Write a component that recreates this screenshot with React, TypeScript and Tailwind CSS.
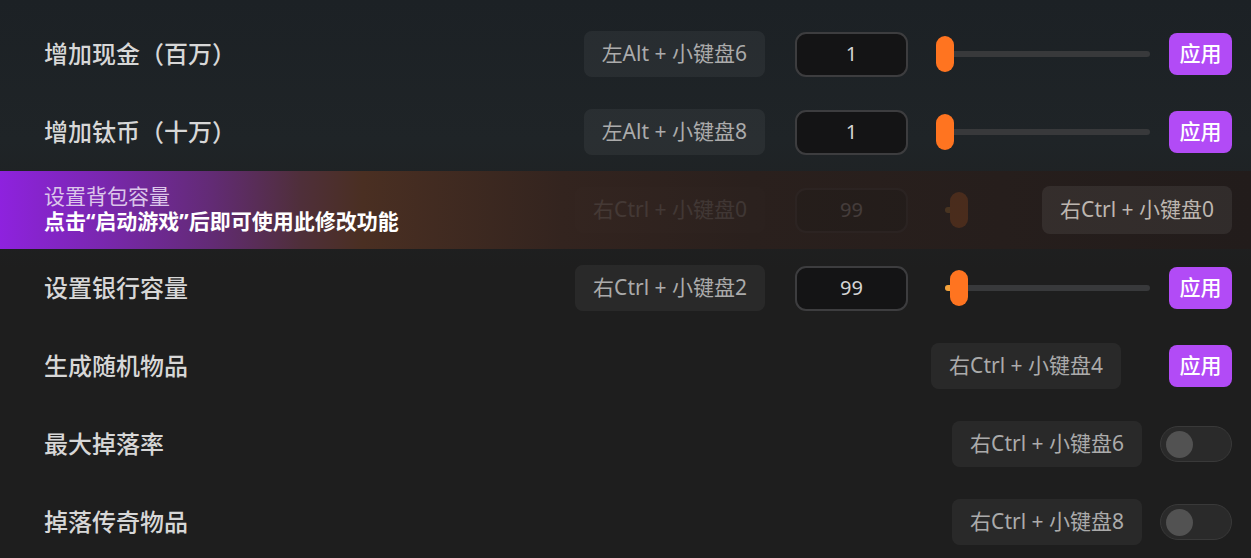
import React from "react";

const font = { fontFamily: '"Noto Sans", "Noto Sans CJK SC", sans-serif' };

function Chip({ text, className = "" }: { text: string; className?: string }) {
  return (
    <div
      className={`h-[46px] px-[18px] flex items-center rounded-[8px] bg-white/[0.05] text-[21px] text-[#ababab] whitespace-nowrap ${className}`}
    >
      {text}
    </div>
  );
}

function NumInput({ value }: { value: string }) {
  return (
    <div className="w-[113px] h-[45px] rounded-[11px] border-2 border-[#3d3d3f] bg-[#141415] flex items-center justify-center text-[20px] text-[#d4d4d4]">
      {value}
    </div>
  );
}

function Slider({ pos, fill, noTrack }: { pos: number; fill?: boolean; noTrack?: boolean }) {
  return (
    <div className="relative w-[214px] h-[36px]">
      {!noTrack && <div className="absolute left-[9px] right-0 top-[15px] h-[6px] rounded-full bg-[#38393b]" />}
      {fill && (
        <div
          className="absolute left-[9px] top-[15px] h-[6px] rounded-full bg-[#f5a23a]"
          style={{ width: pos }}
        />
      )}
      <div
        className="absolute top-0 w-[18px] h-[36px] rounded-full bg-[#ff7420]"
        style={{ left: pos }}
      />
    </div>
  );
}

function ApplyBtn({ hidden }: { hidden?: boolean }) {
  return (
    <div
      className={`w-[63px] h-[42px] rounded-[8px] bg-[#b24bf6] flex items-center justify-center text-[21px] text-white font-medium ${hidden ? "invisible" : ""}`}
    >
      应用
    </div>
  );
}

function Toggle() {
  return (
    <div className="w-[72px] h-[36px] rounded-full bg-[#2a2a2a] border border-[#393939] flex items-center px-[5px]">
      <div className="w-[27px] h-[27px] rounded-full bg-[#525252]" />
    </div>
  );
}

function Label({ text }: { text: string }) {
  return <div className="text-[24px] font-medium text-[#d7d7d7] whitespace-nowrap">{text}</div>;
}

function SliderControls({ hotkey, value, pos, fill, faded }: { hotkey: string; value: string; pos: number; fill?: boolean; faded?: boolean }) {
  return (
    <div className="ml-auto flex items-center">
      <Chip text={hotkey} />
      <div className="ml-[30px]">
        <NumInput value={value} />
      </div>
      <div className="ml-[28px]">
        <Slider pos={pos} fill={fill} noTrack={faded} />
      </div>
      <div className="ml-[19px]">
        <ApplyBtn hidden={faded} />
      </div>
    </div>
  );
}

function SliderRow({ label, hotkey, value, pos, fill }: { label: string; hotkey: string; value: string; pos: number; fill?: boolean }) {
  return (
    <div className="h-[78px] flex items-center pl-[44px] pr-[19px]">
      <Label text={label} />
      <SliderControls hotkey={hotkey} value={value} pos={pos} fill={fill} />
    </div>
  );
}

export default function App() {
  return (
    <div
      style={font}
      className="w-[1251px] h-[558px] overflow-hidden bg-[linear-gradient(180deg,#1c2125_0%,#1f2427_25%,#1e1e1e_48%,#1e1e1e_100%)] pt-[15px]"
    >
      <SliderRow label="增加现金（百万）" hotkey="左Alt + 小键盘6" value="1" pos={0} />
      <SliderRow label="增加钛币（十万）" hotkey="左Alt + 小键盘8" value="1" pos={0} />

      {/* disabled row with overlay */}
      <div className="relative h-[78px] bg-[linear-gradient(90deg,#8e22de_0%,#7a27b0_8%,#622b74_17%,#4f2f3a_24%,#4a2f22_29%,#33241f_45%,#2a201d_60%,#221c1b_100%)]">
        <div className="absolute inset-0 flex items-center pl-[44px] pr-[19px] opacity-[0.16]">
          <SliderControls hotkey="右Ctrl + 小键盘0" value="99" pos={14} fill faded />
        </div>
        <div className="absolute inset-0 flex items-center pl-[44px] pr-[19px]">
          <div className="flex flex-col -mt-[3px]">
            <div className="text-[21px] leading-[24px] text-[#dcc6ea]">设置背包容量</div>
            <div className="text-[21px] leading-[26px] font-bold text-white">点击“启动游戏”后即可使用此修改功能</div>
          </div>
          <Chip text="右Ctrl + 小键盘0" className="ml-auto !h-[48px] !bg-white/[0.07] !text-[#bdb6b0]" />
        </div>
      </div>

      <SliderRow label="设置银行容量" hotkey="右Ctrl + 小键盘2" value="99" pos={14} fill />

      <div className="h-[78px] flex items-center pl-[44px] pr-[19px]">
        <Label text="生成随机物品" />
        <div className="ml-auto flex items-center">
          <Chip text="右Ctrl + 小键盘4" />
          <div className="ml-[48px]">
            <ApplyBtn />
          </div>
        </div>
      </div>

      <div className="h-[78px] flex items-center pl-[44px] pr-[19px]">
        <Label text="最大掉落率" />
        <div className="ml-auto flex items-center">
          <Chip text="右Ctrl + 小键盘6" />
          <div className="ml-[18px]">
            <Toggle />
          </div>
        </div>
      </div>

      <div className="h-[78px] flex items-center pl-[44px] pr-[19px]">
        <Label text="掉落传奇物品" />
        <div className="ml-auto flex items-center">
          <Chip text="右Ctrl + 小键盘8" />
          <div className="ml-[18px]">
            <Toggle />
          </div>
        </div>
      </div>
    </div>
  );
}
